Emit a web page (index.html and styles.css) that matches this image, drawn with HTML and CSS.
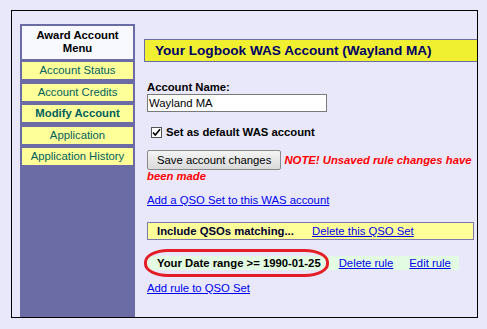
FILE: index.html
```html
<!DOCTYPE html>
<html>
<head>
<meta charset="utf-8">
<link rel="stylesheet" href="styles.css">
</head>
<body>
<div class="frame">
  <nav class="sidebar">
    <div class="menu-head">Award Account<br>Menu</div>
    <a class="menu-item">Account Status</a>
    <a class="menu-item">Account Credits</a>
    <a class="menu-item current">Modify Account</a>
    <a class="menu-item">Application</a>
    <a class="menu-item">Application History</a>
  </nav>
  <main class="main">
    <h1 class="title">Your Logbook WAS Account (Wayland MA)</h1>
    <div class="content">
      <div class="label">Account Name:</div>
      <div class="field">Wayland MA</div>
      <div class="check-row">
        <span class="checkbox"><svg width="9" height="9" viewBox="0 0 9 9"><path d="M1 4.5 L3.3 7 L8 1.2" fill="none" stroke="#000" stroke-width="1.6"/></svg></span>
        <span class="check-label">Set as default WAS account</span>
      </div>
      <p class="save-line"><span class="btn">Save account changes</span> <span class="note">NOTE! Unsaved rule changes have</span><br><span class="note">been made</span></p>
      <a class="link block" href="#">Add a QSO Set to this WAS account</a>
      <div class="qso-set">
        <span class="qso-head">Include QSOs matching...</span>
        <a class="link del-set" href="#">Delete this QSO Set</a>
      </div>
      <div class="rule-wrap">
        <div class="rule">
          <span class="rule-text">Your Date range &gt;= 1990-01-25</span>
          <a class="link del-rule" href="#">Delete rule</a>
          <a class="link edit-rule" href="#">Edit rule</a>
        </div>
        <div class="ring"></div>
      </div>
      <a class="link block add-rule" href="#">Add rule to QSO Set</a>
    </div>
  </main>
</div>
</body>
</html>
```
FILE: styles.css
```css
html, body {
  margin: 0;
  padding: 0;
  background: #e8e8fa;
}
body {
  font-family: "Liberation Sans", Arial, sans-serif;
  font-size: 11.3px;
  color: #000;
}
.frame {
  box-sizing: border-box;
  margin: 10px 0 0 11px;
  width: 467px;
  height: 308px;
  border: 1px solid #000;
  display: flex;
  padding: 13px 0 0 8px;
  gap: 9px;
  overflow: hidden;
}
.sidebar {
  box-sizing: border-box;
  width: 115px;
  flex: none;
  background: #6b6ba6;
  padding: 2px;
  display: flex;
  flex-direction: column;
}
.menu-head {
  background: #f8f8ff;
  font-weight: bold;
  text-align: center;
  line-height: 13px;
  padding: 3px 0 4px;
  height: 26px;
}
.menu-item {
  display: block;
  background: #ffff99;
  color: #005f5f;
  text-align: center;
  height: 17px;
  line-height: 17px;
  margin-top: 4.5px;
  white-space: nowrap;
}
.menu-item:first-of-type {
  margin-top: 3px;
}
.menu-item.current {
  font-weight: bold;
}
.main {
  flex: 1;
  min-width: 0;
}
.title {
  margin: 15px 0 0;
  box-sizing: border-box;
  height: 23px;
  background: #f0f030;
  border: 1px solid #6b6ba6;
  border-right: none;
  padding-left: 10px;
  font-size: 13.6px;
  line-height: 21px;
  font-weight: bold;
  color: #000066;
  white-space: nowrap;
}
.content {
  padding-left: 3px;
}
.label {
  margin-top: 18px;
  font-weight: bold;
  line-height: 14px;
}
.field {
  box-sizing: border-box;
  width: 180px;
  height: 18px;
  background: #fff;
  border: 1px solid #7a7a7a;
  padding-left: 1px;
  line-height: 16px;
}
.check-row {
  margin-top: 14px;
  display: flex;
  align-items: center;
  height: 13px;
}
.checkbox {
  box-sizing: border-box;
  width: 11px;
  height: 11px;
  margin: 0 4px 0 4px;
  border: 1px solid #555;
  background: #fff;
  display: flex;
  align-items: center;
  justify-content: center;
}
.checkbox svg {
  display: block;
}
.check-label {
  font-weight: bold;
  line-height: 13px;
}
.save-line {
  margin: 11px 0 0;
  line-height: 12px;
}
.btn {
  display: inline-block;
  box-sizing: border-box;
  height: 20px;
  line-height: 18px;
  padding: 0 9px;
  border: 1px solid #8a8a8a;
  border-radius: 2px;
  background: linear-gradient(#f4f4f4, #d9d9d9);
  color: #000;
}
.note {
  color: #ff0000;
  font-weight: bold;
  font-style: italic;
}
.link {
  color: #0000ee;
  text-decoration: underline;
}
.block {
  display: block;
  line-height: 14px;
  margin-top: 11px;
}
.qso-set {
  box-sizing: border-box;
  margin-top: 15px;
  width: 327px;
  height: 18px;
  border: 1px solid #7a7ab0;
  background: #ffff99;
  padding-left: 9px;
  line-height: 16px;
  white-space: nowrap;
}
.qso-head {
  font-weight: bold;
  color: #000033;
}
.del-set {
  margin-left: 15px;
}
.rule-wrap {
  position: relative;
  margin-top: 16px;
}
.rule {
  display: inline-flex;
  background: #e2fbe2;
  height: 14px;
  line-height: 14px;
  padding: 0 8px 0 10px;
  white-space: nowrap;
  vertical-align: top;
}
.rule-text {
  font-weight: bold;
}
.del-rule {
  margin-left: 18px;
}
.edit-rule {
  margin-left: 16px;
}
.ring {
  position: absolute;
  left: -3px;
  top: -7px;
  width: 185px;
  height: 28px;
  box-sizing: border-box;
  border: 3px solid #e31e26;
  border-radius: 24px / 13px;
}
.add-rule {
  margin-top: 11px;
}
```
